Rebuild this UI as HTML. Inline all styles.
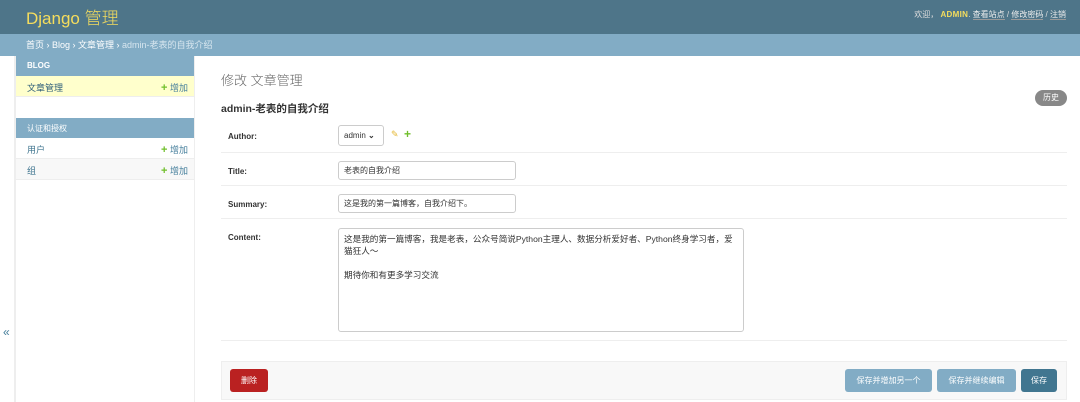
<!DOCTYPE html>
<html><head><meta charset="utf-8"><style>
*{box-sizing:border-box;margin:0;padding:0}
body{width:1080px;height:402px;overflow:hidden;background:#fff;font-family:"Liberation Sans","Noto Sans CJK SC",sans-serif;font-size:9px;color:#333;position:relative}
.abs{position:absolute}
#hdr{left:0;top:0;width:1080px;height:34px;background:#4e7589}
#hdr .logo{left:26px;top:4px;font-size:17px;color:#f5dd5d;font-weight:300}
#hdr .user{right:14px;top:9px;color:#ddd;font-size:8px}
#hdr .user b{color:#f5dd5d;letter-spacing:.3px}
#hdr .user u{text-decoration:none;border-bottom:1px solid #999;color:#eee}
#bc{left:0;top:34px;width:1080px;height:22px;background:#82acc5;color:#fff;font-size:9px;padding:4px 26px}
#bc span{color:#d7e6ef}
#side{left:15px;top:56px;width:180px;height:346px;border-right:1px solid #eee;border-left:1px solid #eee}
.cap{height:20px;background:#82acc5;color:#fff;font-size:8px;padding:5px 11px}
.row{height:21px;border-bottom:1px solid #eee;padding:5px 11px;position:relative;color:#417690}
.row .add{position:absolute;right:6px;top:5px;color:#447e9b}
.row .add b{color:#70bf2b;font-size:11px;line-height:9px}
.toggle{left:3px;top:325px;color:#447e9b;font-size:12px}
h1{left:221px;top:70px;font-size:13px;font-weight:300;color:#666}
h2{left:221px;top:101px;font-size:10.5px;font-weight:bold;color:#333}
.hist{left:1035px;top:90px;width:32px;height:16px;border-radius:8px;background:#888;color:#fff;font-size:8px;text-align:center;line-height:16px}
.fr{left:221px;width:846px;border-bottom:1px solid #eee}
.lbl{position:absolute;left:7px;font-weight:bold;font-size:8px;color:#333}
.inp{position:absolute;left:117px;border:1px solid #ccc;border-radius:3px;background:#fff;font-size:8px;padding:0 5px;color:#333}
.btn{position:absolute;top:369px;height:23px;border-radius:3px;color:#fff;font-size:8px;text-align:center;line-height:23px}
</style></head><body>
<div id="hdr" class="abs"><div class="abs logo">Django 管理</div>
<div class="abs user">欢迎， <b>ADMIN</b>. <u>查看站点</u> / <u>修改密码</u> / <u>注销</u></div></div>
<div id="bc" class="abs">首页 › Blog › 文章管理 › <span>admin-老表的自我介绍</span></div>
<div id="side" class="abs">
<div class="cap" style="font-weight:bold">BLOG</div>
<div class="row" style="background:#ffc;color:#2f5f7a">文章管理<span class="add"><b>+</b> 增加</span></div>
<div style="height:21px"></div>
<div class="cap">认证和授权</div>
<div class="row">用户<span class="add"><b>+</b> 增加</span></div>
<div class="row" style="background:#f8f8f8">组<span class="add"><b>+</b> 增加</span></div>
</div>
<div class="abs toggle">«</div>
<div class="abs" style="left:0;top:56px;width:15px;height:346px;border-right:1px solid #eee"></div>
<h1 class="abs">修改 文章管理</h1>
<h2 class="abs">admin-老表的自我介绍</h2>
<div class="abs hist">历史</div>
<div class="abs fr" style="top:120px;height:33px"><div class="lbl" style="top:12px">Author:</div>
<div class="inp" style="top:5px;width:46px;height:21px;line-height:19px;left:117px">admin <b style="font-size:8px">⌄</b></div>
<div class="abs" style="left:170px;top:9px;color:#e5b835;font-size:9px">✎</div>
<div class="abs" style="left:183px;top:7px;color:#70bf2b;font-size:12px;font-weight:bold">+</div></div>
<div class="abs fr" style="top:153px;height:33px"><div class="lbl" style="top:14px">Title:</div>
<div class="inp" style="top:8px;width:178px;height:19px;line-height:17px">老表的自我介绍</div></div>
<div class="abs fr" style="top:186px;height:33px"><div class="lbl" style="top:14px">Summary:</div>
<div class="inp" style="top:8px;width:178px;height:19px;line-height:17px">这是我的第一篇博客，自我介绍下。</div></div>
<div class="abs fr" style="top:219px;height:122px"><div class="lbl" style="top:14px">Content:</div>
<div class="inp" style="top:9px;width:406px;height:104px;padding:4px 5px;line-height:12px;font-size:8.6px">这是我的第一篇博客，我是老表，公众号简说Python主理人、数据分析爱好者、Python终身学习者，爱猫狂人～<br><br>期待你和有更多学习交流</div></div>
<div class="abs" style="left:221px;top:361px;width:846px;height:39px;background:#f8f8f8;border:1px solid #eee"></div>
<div class="btn" style="left:230px;width:38px;background:#ba2121">删除</div>
<div class="btn" style="left:845px;width:87px;background:#82acc5">保存并增加另一个</div>
<div class="btn" style="left:937px;width:79px;background:#82acc5">保存并继续编辑</div>
<div class="btn" style="left:1021px;width:36px;background:#417690">保存</div>
</body></html>
